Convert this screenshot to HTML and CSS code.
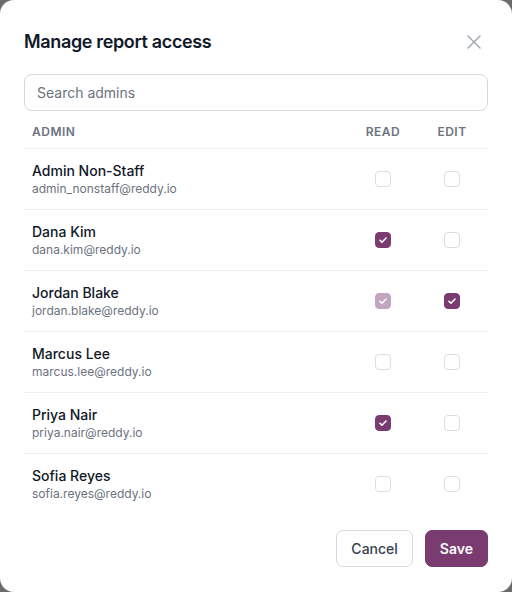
FILE: index.html
```html
<!DOCTYPE html>
<html lang="en">
<head>
  <meta charset="UTF-8" />
  <title>Manage report access</title>
  <link rel="stylesheet" href="styles.css">
</head>
<body>
  <div class="modal">
    <div class="modal-head">
      <h2>Manage report access</h2>
      <button class="close" aria-label="Close">
        <svg width="14" height="14" viewBox="0 0 14 14"><path d="M1 1L13 13M13 1L1 13" stroke="currentColor" stroke-width="1.4" stroke-linecap="round"/></svg>
      </button>
    </div>

    <input class="search" type="text" placeholder="Search admins">

    <div class="table">
      <div class="row head">
        <span>Admin</span>
        <span class="col">Read</span>
        <span class="col">Edit</span>
      </div>

      <div class="row">
        <div class="who"><div class="name">Admin Non-Staff</div><div class="email">admin_nonstaff@reddy.io</div></div>
        <div class="col"><span class="box"></span></div>
        <div class="col"><span class="box"></span></div>
      </div>
      <div class="row">
        <div class="who"><div class="name">Dana Kim</div><div class="email">dana.kim@reddy.io</div></div>
        <div class="col"><span class="box on"><svg viewBox="0 0 16 16"><path d="M4.5 8.3l2.3 2.2 4.7-4.8" /></svg></span></div>
        <div class="col"><span class="box"></span></div>
      </div>
      <div class="row">
        <div class="who"><div class="name">Jordan Blake</div><div class="email">jordan.blake@reddy.io</div></div>
        <div class="col"><span class="box on faded"><svg viewBox="0 0 16 16"><path d="M4.5 8.3l2.3 2.2 4.7-4.8" /></svg></span></div>
        <div class="col"><span class="box on"><svg viewBox="0 0 16 16"><path d="M4.5 8.3l2.3 2.2 4.7-4.8" /></svg></span></div>
      </div>
      <div class="row">
        <div class="who"><div class="name">Marcus Lee</div><div class="email">marcus.lee@reddy.io</div></div>
        <div class="col"><span class="box"></span></div>
        <div class="col"><span class="box"></span></div>
      </div>
      <div class="row">
        <div class="who"><div class="name">Priya Nair</div><div class="email">priya.nair@reddy.io</div></div>
        <div class="col"><span class="box on"><svg viewBox="0 0 16 16"><path d="M4.5 8.3l2.3 2.2 4.7-4.8" /></svg></span></div>
        <div class="col"><span class="box"></span></div>
      </div>
      <div class="row">
        <div class="who"><div class="name">Sofia Reyes</div><div class="email">sofia.reyes@reddy.io</div></div>
        <div class="col"><span class="box"></span></div>
        <div class="col"><span class="box"></span></div>
      </div>
    </div>

    <div class="actions">
      <button class="btn">Cancel</button>
      <button class="btn primary">Save</button>
    </div>
  </div>
</body>
</html>
```

FILE: styles.css
```css
html, body {
  margin: 0;
  height: 100%;
  background-color: #6b6b6b;
}
body {
  font-family: 'Inter', 'Noto Sans', sans-serif;
  color: #111827;
}
.modal {
  box-sizing: border-box;
  height: 592px;
  padding: 28px 24px 25px;
  background: #fff;
  border-radius: 14px;
  display: flex;
  flex-direction: column;
}
.modal-head {
  display: flex;
  justify-content: space-between;
  align-items: center;
  margin-bottom: 18px;
}
h2 {
  margin: 0;
  font-size: 18px;
  line-height: 28px;
  font-weight: 600;
  letter-spacing: -0.35px;
}
.close {
  border: none;
  background: none;
  padding: 0;
  margin-right: 7px;
  color: #9ca3af;
  display: flex;
  cursor: pointer;
}
.search {
  box-sizing: border-box;
  width: 100%;
  height: 37px;
  padding: 0 12px;
  border: 1px solid #d6d8dc;
  border-radius: 8px;
  font-family: inherit;
  font-size: 14px;
  color: #111827;
}
.search::placeholder {
  color: #6b7280;
}
.row {
  display: grid;
  grid-template-columns: 1fr 56px 56px;
  column-gap: 13px;
  align-items: center;
  padding: 12px 8px;
  border-bottom: 1px solid #f0f1f3;
}
.row:last-child {
  border-bottom: none;
}
.row.head {
  padding: 13px 8px 8px;
  font-size: 12px;
  line-height: 16px;
  font-weight: 600;
  letter-spacing: 0.5px;
  text-transform: uppercase;
  color: #6b7280;
  border-bottom-color: #eceef1;
}
.col {
  display: flex;
  justify-content: center;
}
.name {
  font-size: 14px;
  line-height: 20px;
  font-weight: 500;
}
.email {
  font-size: 12px;
  line-height: 16px;
  color: #6b7280;
}
.box {
  box-sizing: border-box;
  width: 16px;
  height: 16px;
  border: 1px solid #dcdde0;
  border-radius: 4px;
  background: #fff;
  display: flex;
}
.box svg {
  width: 14px;
  height: 14px;
  fill: none;
  stroke: #fff;
  stroke-width: 1.8;
  stroke-linecap: round;
  stroke-linejoin: round;
}
.box.on {
  background: #7a3b70;
  border-color: #7a3b70;
}
.box.faded {
  background: #c4a5bf;
  border-color: #c4a5bf;
}
.actions {
  margin-top: auto;
  display: flex;
  justify-content: flex-end;
  gap: 12px;
}
.btn {
  height: 37px;
  padding: 0 14px;
  border: 1px solid #d6d8dc;
  border-radius: 7px;
  background: #fff;
  font-family: inherit;
  font-size: 14px;
  font-weight: 500;
  color: #374151;
  cursor: pointer;
}
.btn.primary {
  background: #7a3b70;
  border-color: #7a3b70;
  color: #fff;
  font-weight: 600;
}
```
